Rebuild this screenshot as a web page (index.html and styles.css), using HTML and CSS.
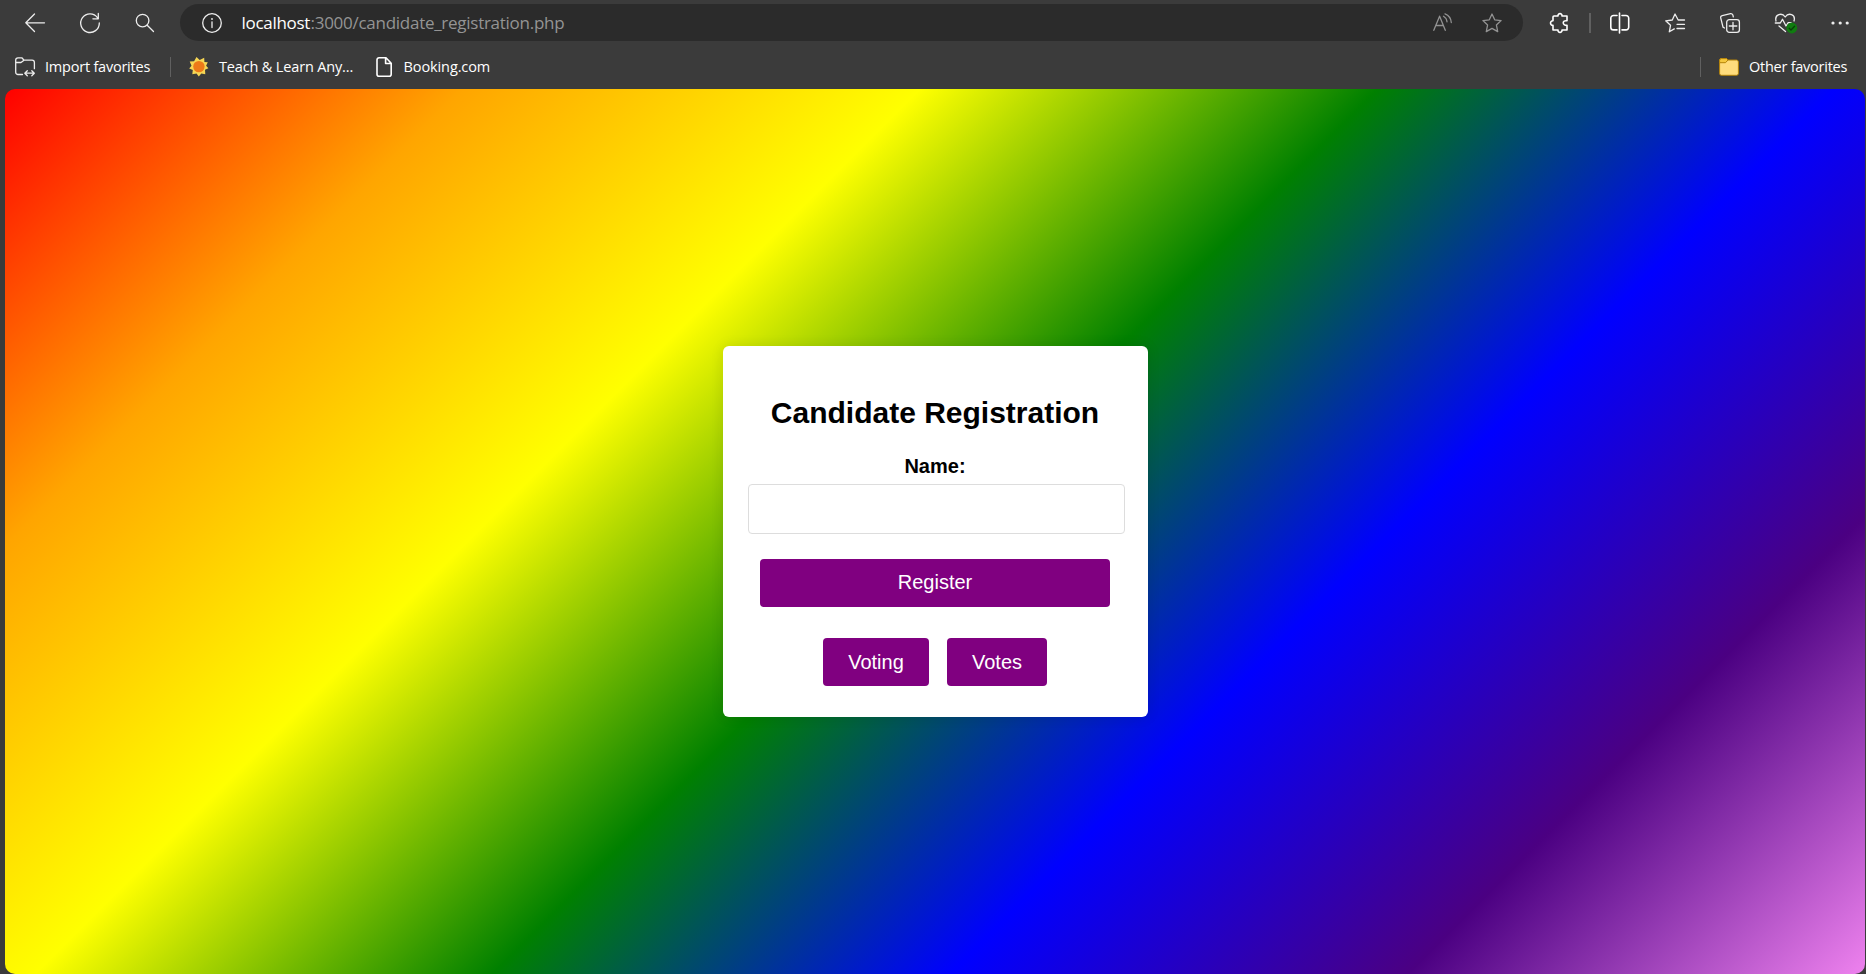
FILE: index.html
```html
<!DOCTYPE html>
<html lang="en">
<head>
<meta charset="utf-8">
<title>Candidate Registration</title>
<link rel="stylesheet" href="styles.css">
</head>
<body>
<header class="toolbar">
  <svg class="icon back" viewBox="0 0 20 20"><path d="M19.5 9.8H.8M9.5 1 .8 9.8l8.7 8.7"/></svg>
  <svg class="icon reload" viewBox="0 0 20 20"><path d="M17.6 4.8A9.3 9.3 0 1 0 19.3 10M18.3.4v5.4h-5.4"/></svg>
  <svg class="icon search" viewBox="0 0 20 20"><circle cx="7.6" cy="7.6" r="6.3"/><path d="m12.2 12.2 6.3 6.3"/></svg>
  <div class="address">
    <svg class="icon info" viewBox="0 0 20 20"><circle cx="10" cy="10" r="9.3"/><path d="M10 8.8v5.8"/><circle class="solid" cx="10" cy="6" r=".9"/></svg>
    <div class="url"><span class="host">localhost</span><span class="path">:3000/candidate_registration.php</span></div>
    <svg class="icon read" viewBox="0 0 20 20"><path d="M.8 17.300 6.600 3.200 12.300 17.300M2.700 12.500h7.700M10.500 3.300a7 7 0 0 1 3.500 5.500M12 .8a10 10 0 0 1 6.300 8.700"/></svg>
    <svg class="icon star" viewBox="0 0 20 20"><path d="m10 1 2.700 5.800 6.400.8-4.700 4.300 1.300 6.700L10 15.400l-5.700 3.200 1.300-6.700L.9 7.600l6.400-.8Z"/></svg>
  </div>
  <svg class="icon puzzle bold" viewBox="0 0 20 20"><path d="M4 3h4C7.600-.2 12.400-.2 12 3h5v4.800c-5-1-5 4.800 0 4.600V17h-5c.4 3.200-4.400 3.200-4 0H3v-4.600c-3.300.2-3.300-4.800 0-4.600V4a1 1 0 0 1 1-1Z"/></svg>
  <i class="rule"></i>
  <svg class="icon split bold" viewBox="0 0 20 20"><path d="M7 2.500H3.500A2.700 2.700 0 0 0 .8 5.200v9a2.700 2.700 0 0 0 2.700 2.700H7M12 2.500h4a2.700 2.700 0 0 1 2.700 2.700v9a2.700 2.700 0 0 1-2.700 2.700h-4M9.500 0v20"/></svg>
  <svg class="icon favs" viewBox="0 0 20 20"><path d="M19.500 7h-6.300L10 1 7.300 7l-6.600.8 4.800 4.500-1.200 6.500 5-2.900M12 11.300h7.500M12 15.500h7.500"/></svg>
  <svg class="icon collections" viewBox="0 0 20 20"><rect x="6.700" y="6.700" width="12.700" height="12.700" rx="2.600"/><path d="M13 9.300v7.500M9.300 13h7.500M4.500 15 3 14.100.7 4.900A2 2 0 0 1 2.200 2.600L10.500.7a2 2 0 0 1 2.400 1.500l.4 1.600"/></svg>
  <svg class="icon health" viewBox="0 0 22 20"><path d="M1 8C-.7 1.200 7-.8 10.200 4 13.500-.8 21 1.200 19 8M.3 10h5l2.200-3.700L11 13l2.200-3.300h3M4 13l6.500 5.500"/><circle class="badge" cx="16.800" cy="15" r="5.400"/><path class="tick" d="m14.200 15.200 1.800 1.800 3.600-3.800"/></svg>
  <svg class="icon more" viewBox="0 0 18 20"><circle class="solid" cx="2" cy="10" r="1.600"/><circle class="solid" cx="9.200" cy="10" r="1.600"/><circle class="solid" cx="16.200" cy="10" r="1.600"/></svg>
</header>
<nav class="bookmarks">
  <svg class="icon import" viewBox="0 0 20 20"><path d="M7.500 17.500H3A2.300 2.300 0 0 1 .7 15.200V3A2.300 2.300 0 0 1 3 .8h3.800l2.300 2.400h8A2.300 2.300 0 0 1 19.400 5.500v6.200M.8 5.500H6l3-2.300M9.800 16.200h9.500M12.300 13.700l-2.500 2.500 2.500 2.500M16.800 13.700l2.500 2.500-2.500 2.500"/></svg>
  <span class="label import-label">Import favorites</span>
  <i class="divider first"></i>
  <svg class="sun" viewBox="0 0 20 20"><path fill="#f5d554" d="m7.500 0 3.200 3 4.500-2.200.2 4.200 3.400.2-1.700 3.600 2.300 2.500-3.400 1.500.3 4.400-4-.6-2.500 2.800-2.300-3-4.200.8.500-4.200L.2 11.400l2.300-2.700L.7 4.500l4.400-.2Z"/><circle cx="9.900" cy="9.600" r="5.700" fill="#ed7918"/></svg>
  <span class="label teach-label">Teach &amp; Learn Any...</span>
  <svg class="icon page bold" viewBox="0 0 16 20"><path d="M3 .8h7l5.200 5.400v11a2 2 0 0 1-2 2H3a2 2 0 0 1-2-2V2.800a2 2 0 0 1 2-2ZM9.600 1v5.500H15"/></svg>
  <span class="label booking-label">Booking.com</span>
  <i class="divider last"></i>
  <svg class="folder" viewBox="0 0 20 18"><path fill="#ffdc7c" stroke="#b48309" d="M.6 3.500V15.500a1.800 1.800 0 0 0 1.800 1.800h15.200a1.800 1.800 0 0 0 1.800-1.800V4a2 2 0 0 0-1.800-2H9L7.500.6H2.400A1.800 1.800 0 0 0 .6 2.400Z"/><path fill="#f5c83e" stroke="#b48309" d="M.6 4.700V2.400A1.800 1.800 0 0 1 2.400.6h5.100L9 2 6.500 4.700Z"/></svg>
  <span class="label other-label">Other favorites</span>
</nav>
<main class="viewport">
  <form class="card" onsubmit="return false">
    <h2 class="title">Candidate Registration</h2>
    <label class="name-label" for="name">Name:</label>
    <input class="name-input" id="name" type="text">
    <button class="button register" type="submit">Register</button>
    <div class="links">
      <a class="button voting">Voting</a>
      <a class="button votes">Votes</a>
    </div>
  </form>
</main>
</body>
</html>
```
FILE: styles.css
```css
* { box-sizing: border-box; }
body {
  margin: 0;
  height: 974px;
  overflow: hidden;
  display: flex;
  flex-direction: column;
  background: #3b3b3b;
  font-family: "Liberation Sans", Arial, sans-serif;
}
.toolbar {
  display: flex;
  align-items: center;
  height: 45px;
  padding-left: 25px;
  flex: none;
}
.icon {
  width: 20px;
  height: 20px;
  flex: none;
  fill: none;
  stroke: #ededed;
  stroke-width: 1.3;
  stroke-linecap: round;
  stroke-linejoin: round;
  overflow: visible;
}
.bold { stroke-width: 1.6; stroke: #fff; }
.solid { fill: #ededed; stroke: none; }
.reload { margin-left: 35px; }
.search { margin-left: 35px; }
.address {
  display: flex;
  align-items: center;
  width: 1343px;
  height: 37px;
  margin-left: 25px;
  padding-left: 22px;
  border-radius: 19px;
  background: #2b2b2b;
  flex: none;
}
.url {
  display: flex;
  width: 1211px;
  padding-left: 19.5px;
  font: 17px/24px "Open Sans", "Noto Sans", sans-serif;
  white-space: nowrap;
}
.host { color: #fff; width: 69px; letter-spacing: -0.3px; }
.path { color: #949494; letter-spacing: -0.27px; }
.read, .star { stroke: #929292; }
.star { margin-left: 29px; }
.puzzle { margin-left: 27px; }
.rule { width: 2px; height: 20px; margin-left: 19px; background: #606060; }
.split { margin-left: 19px; }
.favs { margin-left: 35px; }
.collections { margin-left: 35px; }
.health { width: 22px; margin-left: 35px; }
.badge { fill: #107c10; stroke: none; }
.tick { stroke: #0a3e0a; }
.more { width: 18px; margin-left: 34px; }
.bookmarks {
  display: flex;
  align-items: center;
  height: 44px;
  padding-left: 15px;
  flex: none;
}
.label {
  font: 14.5px/20px "Open Sans", "Noto Sans", sans-serif;
  color: #fff;
  white-space: nowrap;
}
.import-label { width: 125px; padding-left: 10px; letter-spacing: -0.22px; }
.divider { width: 1px; height: 20px; background: #606060; }
.first { margin-left: 10px; }
.sun { width: 20px; height: 20px; margin-left: 18px; }
.teach-label { width: 167px; padding-left: 10px; letter-spacing: -0.16px; }
.page { width: 16px; }
.booking-label { padding-left: 11.5px; letter-spacing: -0.1px; }
.last { margin-left: auto; }
.folder { width: 20px; height: 18px; margin-left: 18px; }
.other-label { width: 127px; padding-left: 10px; letter-spacing: -0.25px; }
.viewport {
  display: flex;
  align-items: center;
  justify-content: center;
  width: 1860px;
  height: 885px;
  margin-left: 5px;
  border-radius: 10px;
  background: linear-gradient(135deg, red, orange, yellow, green, blue, indigo, violet);
  flex: none;
}
.card {
  display: flex;
  flex-direction: column;
  align-items: center;
  width: 425px;
  height: 371px;
  padding: 49px 25px 0;
  border-radius: 6px;
  background: #fff;
  box-shadow: 0 0 12.5px rgba(0, 0, 0, .1);
}
.title { margin: 0; font-size: 30px; line-height: 35px; white-space: nowrap; }
.name-label { margin-top: 25px; font-size: 20px; line-height: 23px; font-weight: bold; }
.name-input {
  width: 377px;
  height: 50px;
  margin: 6px 0 0;
  border: 1px solid #ddd;
  border-radius: 4px;
  flex: none;
  align-self: flex-start;
  outline: 0;
}
.button {
  display: flex;
  align-items: center;
  justify-content: center;
  height: 48px;
  border: 0;
  border-radius: 4px;
  background: purple;
  color: #fff;
  font: 20px/23px "Liberation Sans", Arial, sans-serif;
}
.register { width: 350px; margin-top: 25px; padding: 0 0 2px; }
.links { display: flex; gap: 18px; margin-top: 31px; }
.voting { width: 106px; }
.votes { width: 100px; }
```
